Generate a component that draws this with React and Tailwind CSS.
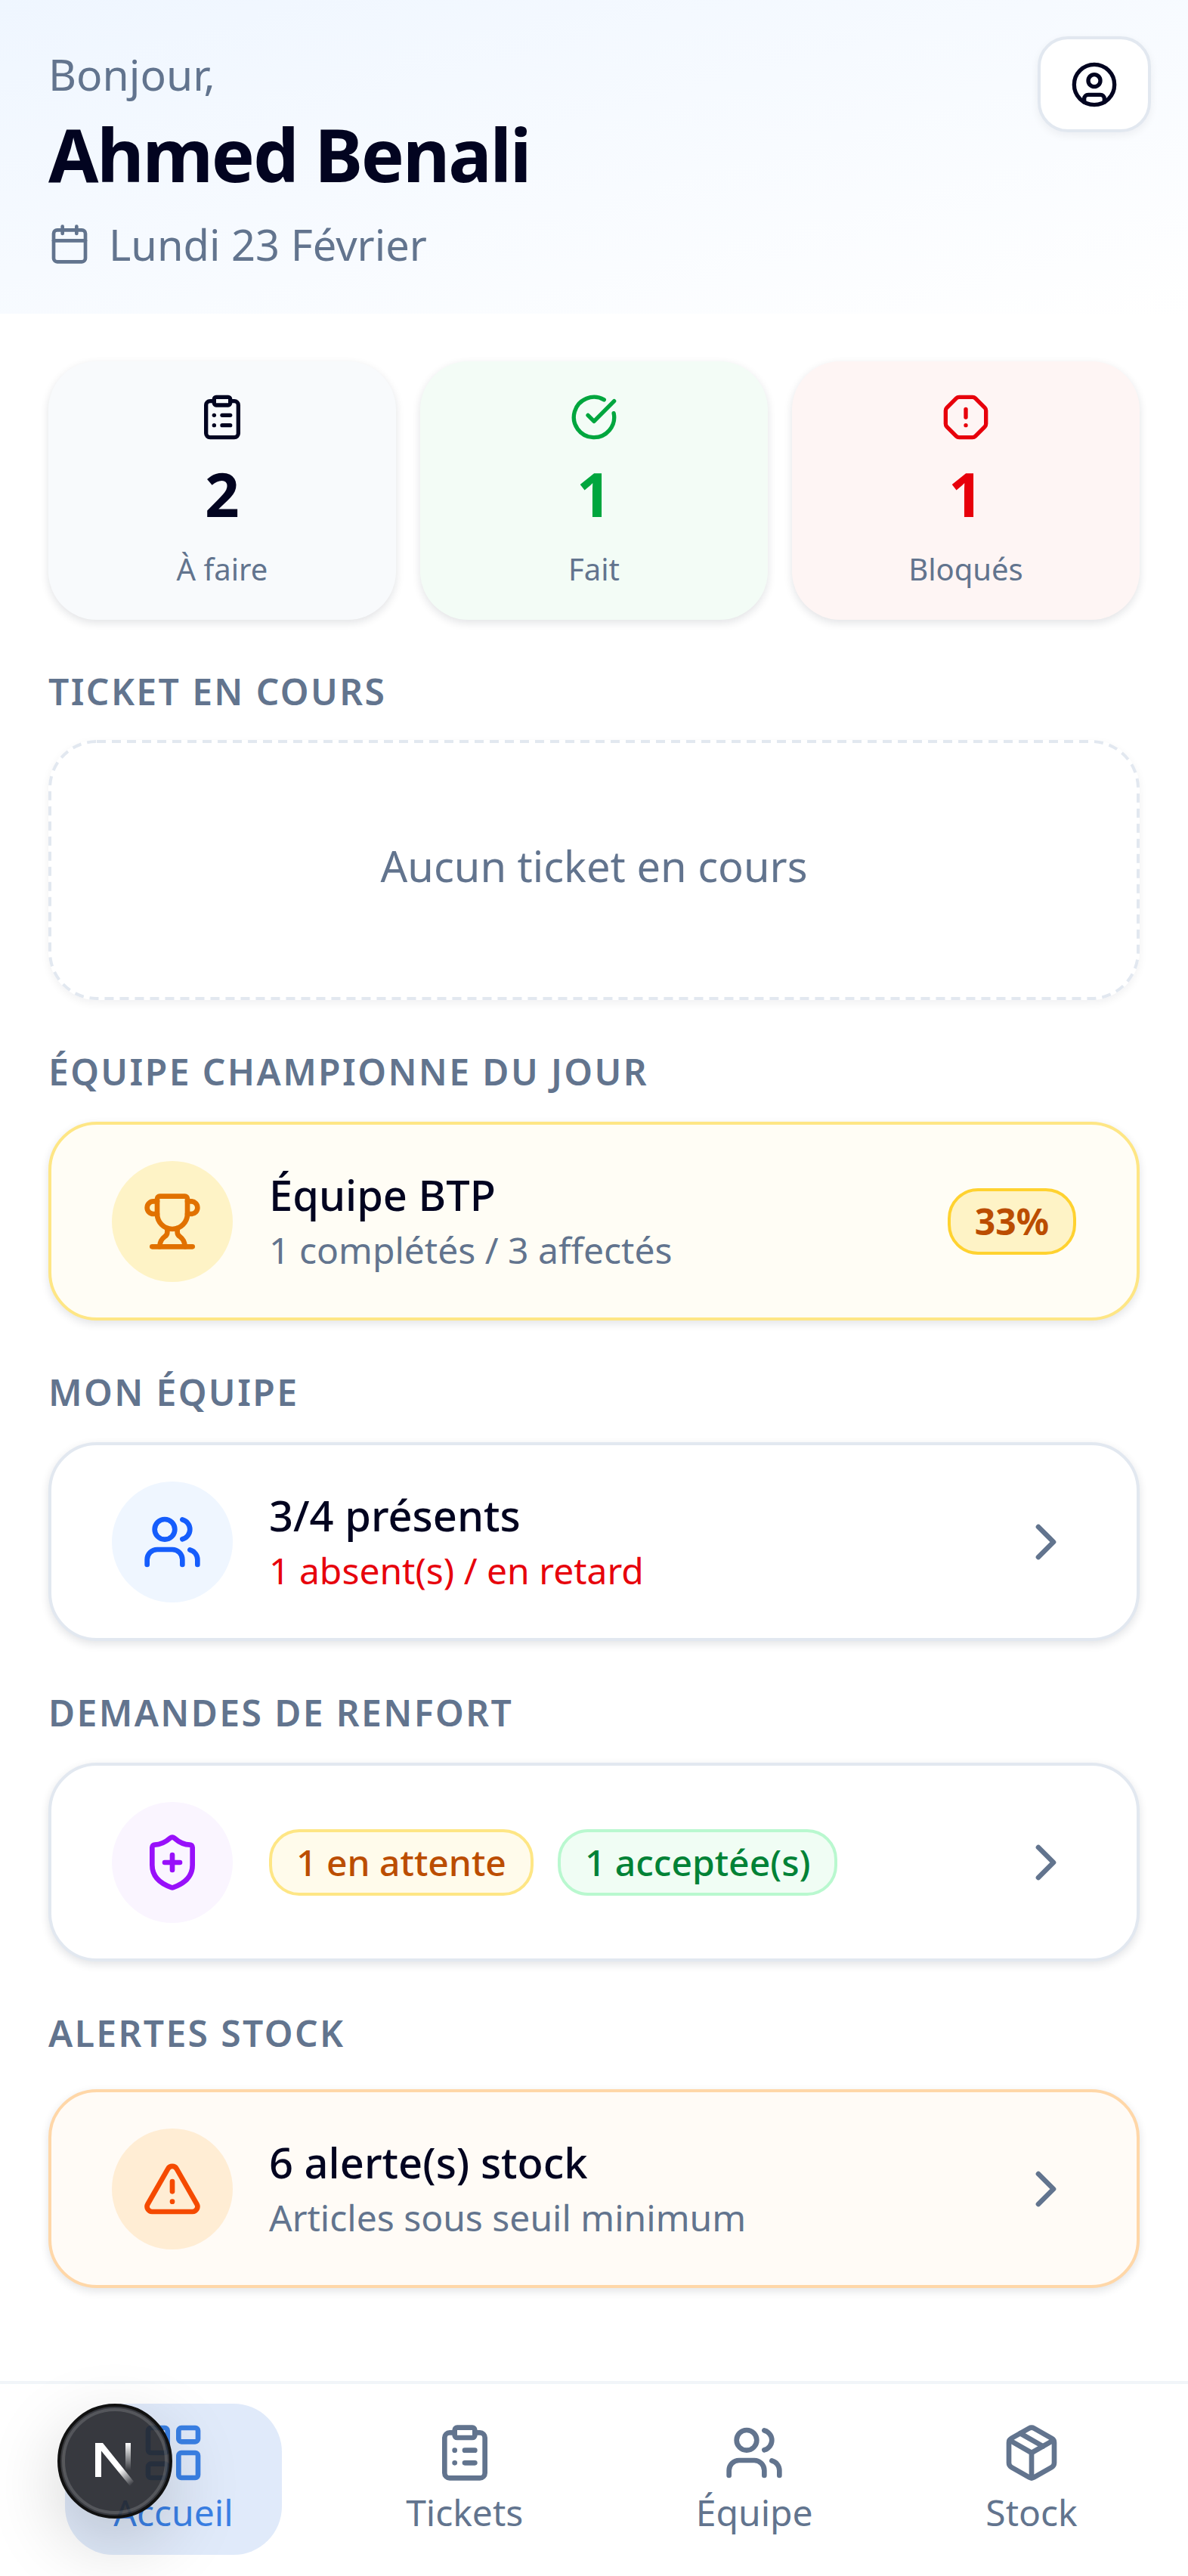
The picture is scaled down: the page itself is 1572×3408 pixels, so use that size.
import React from 'react';
import {
    Calendar,
    ChevronRight,
    CircleCheckBig,
    CircleUser,
    ClipboardList,
    LayoutDashboard,
    OctagonAlert,
    Package,
    ShieldPlus,
    TriangleAlert,
    Trophy,
    Users
} from 'lucide-react';

const stats = [
    { label: 'À faire', value: 2, Icon: ClipboardList, box: 'bg-slate-50', color: 'text-[#020420]' },
    { label: 'Fait', value: 1, Icon: CircleCheckBig, box: 'bg-[#f3fcf6]', color: 'text-green-600' },
    { label: 'Bloqués', value: 1, Icon: OctagonAlert, box: 'bg-[#fef5f4]', color: 'text-red-600' }
];

const navItems = [
    { label: 'Accueil', Icon: LayoutDashboard, active: true },
    { label: 'Tickets', Icon: ClipboardList },
    { label: 'Équipe', Icon: Users },
    { label: 'Stock', Icon: Package }
];

const SectionTitle = ({ children }) => (
    <h2 className='text-[48px] leading-[64px] font-semibold uppercase tracking-[2.4px] text-slate-500'>{children}</h2>
);

const RowCard = ({ className, iconBox, Icon, children, right }) => (
    <div className={`flex items-center rounded-[64px] border-4 px-[80px] h-[263px] shadow-[0_4px_12px_rgba(15,23,42,0.12)] ${className}`}>
        <div className={`flex h-[160px] w-[160px] shrink-0 items-center justify-center rounded-full ${iconBox}`}>
            <Icon size={80} />
        </div>
        <div className='ml-[48px] flex-1'>{children}</div>
        {right}
    </div>
);

const Chevron = () => <ChevronRight size={80} className='shrink-0 text-slate-500' />;

const DevBadge = () => (
    <div className='absolute left-[76px] top-[3180px] flex h-[152px] w-[152px] items-center justify-center rounded-full border-[4px] border-[#111] bg-[#25262a]/90 shadow-[0_32px_96px_rgba(0,0,0,0.18)]'>
        <div className='absolute inset-[2px] rounded-full border-[4px] border-white/15' />
        <svg width='52' height='58' viewBox='0 0 52 58' fill='none' className='mt-[10px]'>
            <defs>
                <linearGradient id='diag' x1='14' y1='10' x2='48' y2='56' gradientUnits='userSpaceOnUse'>
                    <stop offset='0.55' stopColor='#fff' />
                    <stop offset='1' stopColor='#fff' stopOpacity='0' />
                </linearGradient>
                <linearGradient id='bar' x1='43' y1='0' x2='43' y2='36' gradientUnits='userSpaceOnUse'>
                    <stop stopColor='#fff' />
                    <stop offset='1' stopColor='#fff' stopOpacity='0' />
                </linearGradient>
            </defs>
            <path d='M0 0H8V45H0Z' fill='#fff' />
            <path d='M0 0H10L51 51L46 57L6 8H0Z' fill='url(#diag)' />
            <path d='M40 0H47V36H40Z' fill='url(#bar)' />
        </svg>
    </div>
);

const App = () => {
    return (
        <div className="relative h-[3408px] w-full overflow-hidden bg-white font-['Noto_Sans',sans-serif]">
            <header className='flex h-[415px] items-start justify-between bg-gradient-to-br from-[#eff6ff] to-white pl-[64px] pr-[49px] pt-[48px]'>
                <div className='pt-[14px]'>
                    <p className='text-[57px] leading-[72px] text-slate-500'>Bonjour,</p>
                    <h1 className='mt-[10px] text-[96px] leading-[120px] font-bold tracking-[-2.2px] text-[#020420]'>Ahmed Benali</h1>
                    <div className='mt-[23px] flex items-center gap-[24px] text-slate-500'>
                        <Calendar size={56} />
                        <span className='text-[56px] leading-[72px]'>Lundi 23 Février</span>
                    </div>
                </div>
                <button className='flex h-[127px] w-[150px] items-center justify-center rounded-[40px] border-4 border-slate-200 bg-white text-[#020420] shadow-[0_4px_12px_rgba(15,23,42,0.06)]'>
                    <CircleUser size={64} />
                </button>
            </header>

            <main className='flex flex-col px-[64px] pt-[63px]'>
                <div className='grid grid-cols-3 gap-[32px]'>
                    {stats.map(({ label, value, Icon, box, color }) => (
                        <div key={label} className={`flex h-[342px] flex-col items-center rounded-[64px] pt-[42px] shadow-[0_4px_12px_rgba(15,23,42,0.12)] ${box}`}>
                            <Icon size={64} className={color} />
                            <span className={`mt-[19px] text-[80px] leading-[100px] font-bold ${color}`}>{value}</span>
                            <span className='mt-[20px] text-[40px] leading-[60px] text-slate-500'>{label}</span>
                        </div>
                    ))}
                </div>

                <div className='mt-[63px]'><SectionTitle>Ticket en cours</SectionTitle></div>
                <div className='relative mt-[32px] flex h-[344px] items-center justify-center rounded-[64px] pb-[12px] text-[56px] text-slate-500 shadow-[0_4px_12px_rgba(15,23,42,0.06)]'>
                    <svg className='absolute inset-0 h-full w-full' fill='none'>
                        <rect x='2' y='2' rx='62' stroke='#e2e8f0' strokeWidth='4' strokeDasharray='12 8' style={{ width: 'calc(100% - 4px)', height: 'calc(100% - 4px)' }} />
                    </svg>
                    Aucun ticket en cours
                </div>

                <div className='mt-[63px]'><SectionTitle>Équipe championne du jour</SectionTitle></div>
                <div className='mt-[34px]'>
                    <RowCard
                        className='border-amber-200 bg-[#fffdf5]'
                        iconBox='bg-amber-100 text-amber-600'
                        Icon={Trophy}
                        right={<span className='rounded-[40px] border-4 border-amber-300 bg-amber-100 px-[32px] py-[8px] text-[48px] leading-[64px] font-bold text-amber-700'>33%</span>}
                    >
                        <p className='text-[56px] leading-[76px] font-medium text-[#020420]'>Équipe BTP</p>
                        <p className='text-[48px] leading-[72px] text-slate-500'>1 complétés / 3 affectés</p>
                    </RowCard>
                </div>

                <div className='mt-[63px]'><SectionTitle>Mon équipe</SectionTitle></div>
                <div className='mt-[34px]'>
                    <RowCard className='border-slate-200 bg-white' iconBox='bg-blue-50 text-blue-600' Icon={Users} right={<Chevron />}>
                        <p className='text-[56px] leading-[76px] font-medium text-[#020420]'>3/4 présents</p>
                        <p className='text-[48px] leading-[72px] text-red-600'>1 absent(s) / en retard</p>
                    </RowCard>
                </div>

                <div className='mt-[63px]'><SectionTitle>Demandes de renfort</SectionTitle></div>
                <div className='mt-[34px]'>
                    <RowCard className='border-slate-200 bg-white' iconBox='bg-purple-50 text-purple-600' Icon={ShieldPlus} right={<Chevron />}>
                        <div className='flex gap-[32px]'>
                            <span className='rounded-[40px] border-4 border-amber-200 bg-amber-50 px-[32px] py-[8px] text-[48px] leading-[64px] font-medium text-amber-700'>1 en attente</span>
                            <span className='rounded-[40px] border-4 border-green-200 bg-green-50 px-[32px] py-[8px] text-[48px] leading-[64px] font-medium text-green-700'>1 acceptée(s)</span>
                        </div>
                    </RowCard>
                </div>

                <div className='mt-[63px]'><SectionTitle>Alertes stock</SectionTitle></div>
                <div className='mt-[42px]'>
                    <RowCard className='border-orange-200 bg-[#fffbf6]' iconBox='bg-orange-100 text-orange-600' Icon={TriangleAlert} right={<Chevron />}>
                        <p className='text-[56px] leading-[76px] font-medium text-[#020420]'>6 alerte(s) stock</p>
                        <p className='text-[48px] leading-[72px] text-slate-500'>Articles sous seuil minimum</p>
                    </RowCard>
                </div>
            </main>

            <nav className='absolute inset-x-0 bottom-0 flex h-[258px] items-start justify-around border-t-4 border-slate-100 bg-white pl-[36px] pr-[32px] pt-[26px]'>
                {navItems.map(({ label, Icon, active }) => (
                    <div
                        key={label}
                        className={`flex h-[200px] flex-col items-center rounded-[64px] px-[64px] pt-[25px] ${active ? 'bg-[#e0eafa] text-[#3a80e5]' : 'text-slate-500'}`}
                    >
                        {active ? <Icon size={88} strokeWidth={1.82} className='-m-[4px]' /> : <Icon size={80} />}
                        <span className='mt-[7px] text-[48px] leading-[64px]'>{label}</span>
                    </div>
                ))}
            </nav>

            <DevBadge />
        </div>
    );
};

export default App;
